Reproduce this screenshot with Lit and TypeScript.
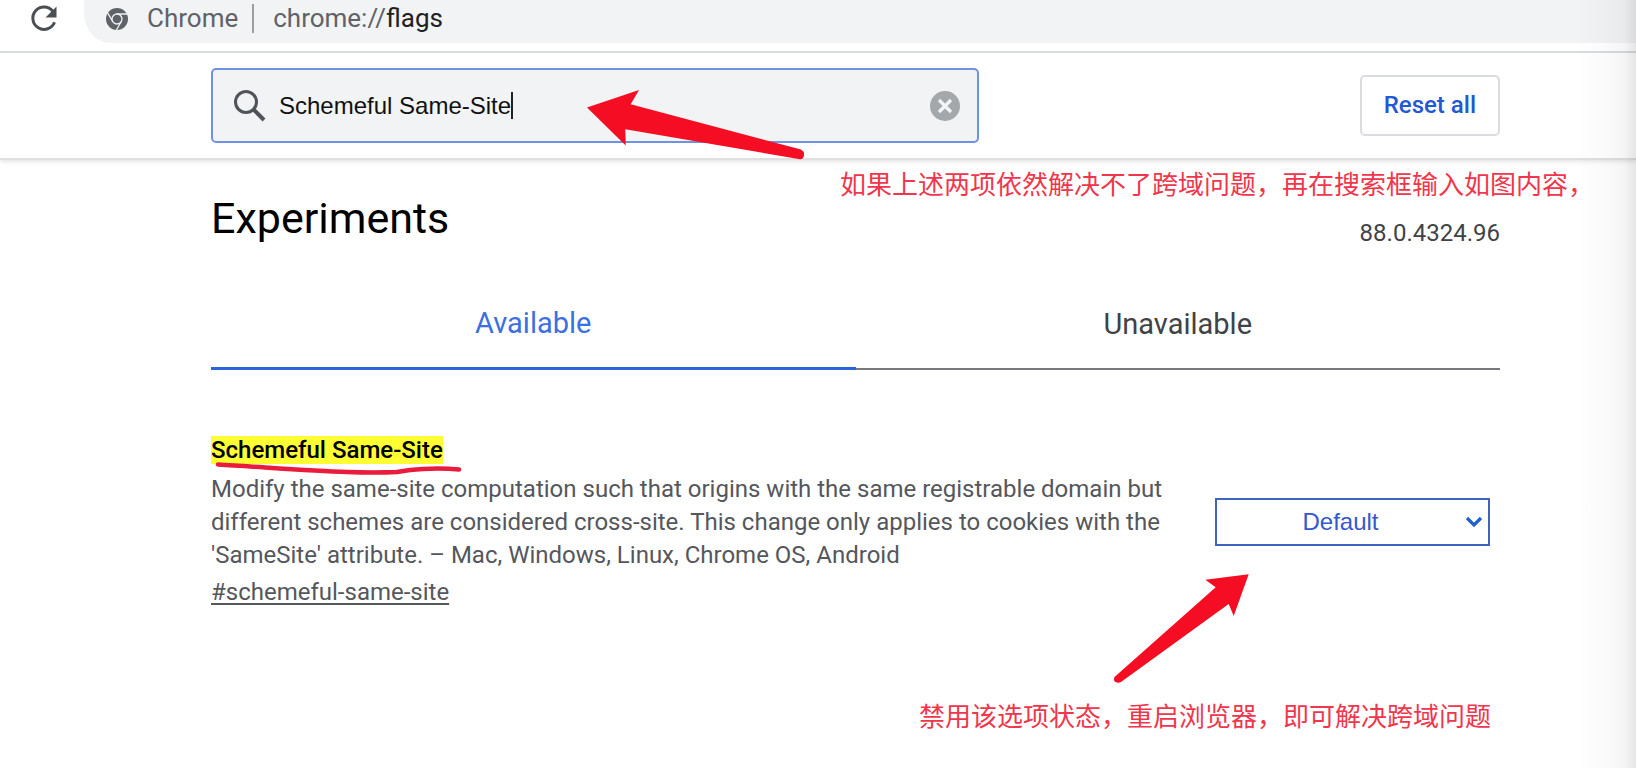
import { LitElement, html, css } from "lit";
import { customElement, state } from "lit/decorators.js";

@customElement("app-root")
export class AppRoot extends LitElement {
  @state() private query = "Schemeful Same-Site";

  static styles = css`
    :host {
      display: block;
      position: relative;
      min-height: 100vh;
      overflow: hidden;
      background: #fff;
      color: #000;
      font-family: Roboto, "Noto Sans CJK SC", sans-serif;
      font-size: 24px;
      line-height: 33px;
    }
    * { box-sizing: border-box; }
    svg { display: block; flex: none; }
    button, input, select { font: inherit; margin: 0; border-radius: 0; }

    .toolbar {
      display: flex;
      align-items: flex-start;
      height: 53px;
      padding-left: 29px;
      gap: 25px;
      border-bottom: 2px solid #dcdddf;
    }
    .reload { display: block; padding: 4px 0 0; border: 0; background: none; }
    .omnibox {
      flex: 1;
      display: flex;
      align-items: center;
      height: 43px;
      padding: 0 0 6px 21px;
      border-bottom-left-radius: 26px 30px;
      background: #f1f3f4;
      color: #5f6368;
      font-size: 26px;
    }
    .product { margin-left: 18px; }
    .divider { width: 2px; height: 29px; margin: 0 19px 0 14px; background: #9a9da1; }
    .path { color: #202124; }

    .header {
      display: flex;
      align-items: center;
      justify-content: space-between;
      height: 107px;
      padding: 0 136px 0 211px;
      border-bottom: 2px solid #dfdfdf;
      box-shadow: 0 2px 4px rgba(0, 0, 0, 0.1);
    }
    .search {
      display: flex;
      align-items: center;
      width: 60%;
      max-width: 768px;
      height: 75px;
      padding: 0 17px 0 20px;
      border: 2px solid #6f93e3;
      border-radius: 5px;
      background: #f1f3f4;
    }
    .search input {
      field-sizing: content;
      margin-left: 12px;
      padding: 0;
      border: 0;
      outline: 0;
      background: none;
      color: #111;
      font-family: "Liberation Sans", sans-serif;
    }
    .caret { width: 2px; height: 27px; background: #222; }
    .clear { margin-left: auto; padding: 0; border: 0; background: none; }
    .reset {
      height: 61px;
      padding: 0 22px;
      border: 2px solid #dadce0;
      border-radius: 5px;
      background: #fff;
      color: #2457d6;
      font-weight: 500;
    }

    .content { padding: 0 136px 0 211px; }
    .title {
      display: flex;
      justify-content: space-between;
      align-items: flex-end;
      padding-top: 28px;
    }
    h1 { margin: 0 0 2px; font-size: 43px; font-weight: 400; line-height: 60px; }
    .version { color: #3f4246; }
    .tabs { display: grid; grid-template-columns: 1fr 1fr; margin-top: 42px; }
    .tab {
      height: 78px;
      padding: 0 0 12px;
      border: 0;
      border-bottom: 2px solid #77797c;
      background: none;
      color: #3f4246;
      font-size: 29px;
    }
    .tab.on { border-bottom: 3px solid #2a65dd; color: #3c6fe0; }

    .flag {
      display: grid;
      grid-template-columns: minmax(0, 1fr) 275px;
      align-items: center;
      gap: 44px;
      margin-top: 64px;
      padding-right: 10px;
    }
    h2 { margin: 0 0 6px; font-size: 24px; font-weight: 500; line-height: 33px; }
    mark { background: #ffff33; color: #000; }
    .flag p { margin: 0 0 4px; color: #55575c; }
    .flag a { color: #55575c; text-underline-offset: 3px; text-decoration-thickness: 2px; }
    .picker { position: relative; }
    .picker select {
      appearance: none;
      display: block;
      width: 100%;
      height: 48px;
      padding: 0 24px 0 0;
      border: 2px solid #3f63c0;
      background: #fff;
      color: #3558cf;
      font-family: "Liberation Sans", sans-serif;
      text-align-last: center;
    }
    .chevron { position: absolute; right: 7px; top: 17px; pointer-events: none; }

    .drawing { position: absolute; inset: 0; width: 100%; height: 768px; pointer-events: none; }
    .note {
      position: absolute;
      margin: 0;
      white-space: nowrap;
      color: #f0364c;
      font-family: "Noto Sans CJK SC", sans-serif;
      font-size: 26px;
      font-weight: 400;
      line-height: 36px;
    }
    .note.first { left: 840px; top: 165px; }
    .note.second { left: 919px; top: 697px; }
    .shade {
      position: absolute;
      inset: 0 0 0 auto;
      width: 60px;
      pointer-events: none;
      background: linear-gradient(to right, rgba(0, 0, 0, 0), rgba(0, 0, 0, 0.02) 50%, rgba(0, 0, 0, 0.04) 80%, rgba(0, 0, 0, 0.1));
    }
  `;

  private onInput(e: Event) {
    this.query = (e.target as HTMLInputElement).value;
  }

  render() {
    return html`
      <div class="toolbar">
        <button class="reload" aria-label="Reload">
          <svg width="30" height="30" viewBox="0 0 30 30">
            <path d="M23.8 7.2 A11.2 11.2 0 1 0 25.5 18.2" fill="none" stroke="#4b4e52" stroke-width="3" />
            <path d="M27.5 2.5 V13.5 H16.5 Z" fill="#4b4e52" />
          </svg>
        </button>
        <div class="omnibox">
          <svg width="24" height="24" viewBox="0 0 24 24">
            <circle cx="12" cy="12" r="11" fill="#5f6368" />
            <g fill="none" stroke="#f1f3f4" stroke-width="1.3">
              <circle cx="12" cy="12" r="5" />
              <path d="M12 7 H22 M7.7 14.5 L2.6 5.8 M16.3 14.5 L11.3 23.2" />
            </g>
            <circle cx="12" cy="12" r="3.2" fill="#5f6368" />
          </svg>
          <span class="product">Chrome</span>
          <span class="divider"></span>
          <span>chrome://<span class="path">flags</span></span>
        </div>
      </div>

      <div class="header">
        <div class="search">
          <svg width="34" height="34" viewBox="0 0 34 34" fill="none" stroke="#505357">
            <circle cx="13" cy="13" r="10.5" stroke-width="3" />
            <path d="M20.5 20.5 L31 31" stroke-width="4" />
          </svg>
          <input aria-label="Search flags" .value=${this.query} @input=${this.onInput} />
          <span class="caret"></span>
          <button class="clear" aria-label="Clear search" @click=${() => (this.query = "")}>
            <svg width="30" height="30" viewBox="0 0 30 30">
              <circle cx="15" cy="15" r="15" fill="#a5a8ab" />
              <path d="M9 9 L21 21 M21 9 L9 21" stroke="#f4f5f6" stroke-width="3.2" />
            </svg>
          </button>
        </div>
        <button class="reset">Reset all</button>
      </div>

      <main class="content">
        <div class="title">
          <h1>Experiments</h1>
          <span class="version">88.0.4324.96</span>
        </div>
        <div class="tabs" role="tablist">
          <button class="tab on" role="tab" aria-selected="true">Available</button>
          <button class="tab" role="tab" aria-selected="false">Unavailable</button>
        </div>
        <section class="flag">
          <div>
            <h2><mark>Schemeful Same-Site</mark></h2>
            <p>
              Modify the same-site computation such that origins with the same registrable domain but
              different schemes are considered cross-site. This change only applies to cookies with the
              'SameSite' attribute. – Mac, Windows, Linux, Chrome OS, Android
            </p>
            <a href="#schemeful-same-site">#schemeful-same-site</a>
          </div>
          <div class="picker">
            <select aria-label="Schemeful Same-Site">
              <option>Default</option>
              <option>Enabled</option>
              <option>Disabled</option>
            </select>
            <svg class="chevron" width="18" height="14" viewBox="0 0 18 14">
              <path d="M2 3 L9 10 L16 3" fill="none" stroke="#1f5fd0" stroke-width="3.2" />
            </svg>
          </div>
        </section>
      </main>

      <svg class="drawing" aria-hidden="true">
        <path
          fill="#f50d23"
          d="M587 107.5 L639 90 L630.7 104.3 L801 149.5 Q804.5 151.5 804 155 Q803.5 159.5 800 159.3 L625.3 129.3 L625.7 145.5 Z"
        />
        <path
          fill="#f50d23"
          d="M1248.7 574.3 L1205.3 579.7 L1215.7 587.3 L1114.5 677 Q1113 680.5 1115.5 682 Q1118 683.5 1121 682 L1228.7 604 L1233.7 616 Z"
        />
        <path
          d="M218 464.5 C262 467 310 471 347 472 Q375 473 397 472 Q410 469.5 423 469 Q442 468 459 469.5"
          fill="none" stroke="#ea1c3c" stroke-width="4.5" stroke-linecap="round"
        />
      </svg>
      <p class="note first">如果上述两项依然解决不了跨域问题，再在搜索框输入如图内容，</p>
      <p class="note second">禁用该选项状态，重启浏览器，即可解决跨域问题</p>
      <div class="shade"></div>
    `;
  }
}
